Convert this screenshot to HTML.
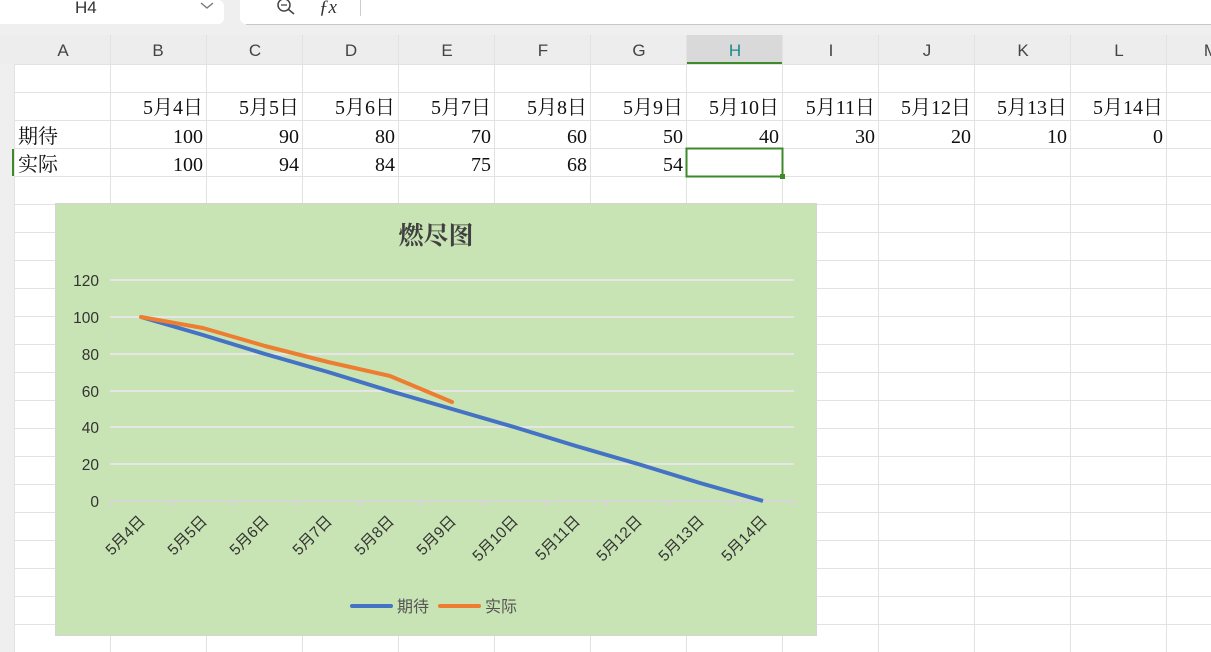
<!DOCTYPE html>
<html><head><meta charset="utf-8"><style>
body{margin:0;width:1211px;height:652px;overflow:hidden;background:#fff;font-family:"Liberation Sans","Noto Sans CJK SC",sans-serif}
svg{position:absolute;left:0;top:0}
.c{font-family:"Liberation Serif","Noto Serif CJK SC",serif;font-size:20px;fill:#111}
.h{font-family:"Liberation Sans",sans-serif;font-size:17px;fill:#444;text-anchor:middle}
.ax{font-family:"Liberation Sans","Noto Sans CJK SC",sans-serif;font-size:15.5px;fill:#333}
</style></head><body>
<svg width="1211" height="652" viewBox="0 0 1211 652">
<rect x="0" y="0" width="1211" height="35" fill="#efefef"/>
<path d="M0 0H218a6 6 0 0 1 6 6V18a6 6 0 0 1 -6 6H0Z" fill="#fff"/>
<path d="M240 0H1211V24H246a6 6 0 0 1 -6 -6Z" fill="#fff"/>
<line x1="246" y1="24.5" x2="1211" y2="24.5" stroke="#c8c8c8"/>
<text x="75" y="13" font-size="17" fill="#333" font-family="Liberation Sans">H4</text>
<path d="M201 3l6 5 6-5" stroke="#777" stroke-width="1.4" fill="none"/>
<circle cx="284" cy="5" r="6" stroke="#444" stroke-width="1.5" fill="none"/>
<line x1="288" y1="9" x2="294" y2="14" stroke="#444" stroke-width="1.5"/>
<line x1="281" y1="5" x2="287" y2="5" stroke="#444" stroke-width="1.3"/>
<text x="319" y="13" font-size="19" font-style="italic" fill="#333" font-family="Liberation Serif">ƒx</text>
<line x1="360.5" y1="0" x2="360.5" y2="16" stroke="#ccc"/>
<rect x="0" y="35" width="1211" height="29" fill="#ededed"/>
<rect x="686" y="35" width="97" height="29" fill="#d9d9d9"/>
<rect x="686" y="62" width="97" height="2" fill="#3d8a2a"/>
<rect x="0" y="64" width="14" height="588" fill="#efefef"/>
<g stroke="#e2e2e2" stroke-width="1">
<line x1="14" y1="64.5" x2="1211" y2="64.5"/>
<line x1="14" y1="92.5" x2="1211" y2="92.5"/>
<line x1="14" y1="120.5" x2="1211" y2="120.5"/>
<line x1="14" y1="148.5" x2="1211" y2="148.5"/>
<line x1="14" y1="176.5" x2="1211" y2="176.5"/>
<line x1="14" y1="204.5" x2="1211" y2="204.5"/>
<line x1="14" y1="232.5" x2="1211" y2="232.5"/>
<line x1="14" y1="260.5" x2="1211" y2="260.5"/>
<line x1="14" y1="288.5" x2="1211" y2="288.5"/>
<line x1="14" y1="316.5" x2="1211" y2="316.5"/>
<line x1="14" y1="344.5" x2="1211" y2="344.5"/>
<line x1="14" y1="372.5" x2="1211" y2="372.5"/>
<line x1="14" y1="400.5" x2="1211" y2="400.5"/>
<line x1="14" y1="428.5" x2="1211" y2="428.5"/>
<line x1="14" y1="456.5" x2="1211" y2="456.5"/>
<line x1="14" y1="484.5" x2="1211" y2="484.5"/>
<line x1="14" y1="512.5" x2="1211" y2="512.5"/>
<line x1="14" y1="540.5" x2="1211" y2="540.5"/>
<line x1="14" y1="568.5" x2="1211" y2="568.5"/>
<line x1="14" y1="596.5" x2="1211" y2="596.5"/>
<line x1="14" y1="624.5" x2="1211" y2="624.5"/>
<line x1="14.5" y1="64" x2="14.5" y2="652"/>
<line x1="110.5" y1="35" x2="110.5" y2="652"/>
<line x1="206.5" y1="35" x2="206.5" y2="652"/>
<line x1="302.5" y1="35" x2="302.5" y2="652"/>
<line x1="398.5" y1="35" x2="398.5" y2="652"/>
<line x1="494.5" y1="35" x2="494.5" y2="652"/>
<line x1="590.5" y1="35" x2="590.5" y2="652"/>
<line x1="686.5" y1="35" x2="686.5" y2="652"/>
<line x1="782.5" y1="35" x2="782.5" y2="652"/>
<line x1="878.5" y1="35" x2="878.5" y2="652"/>
<line x1="974.5" y1="35" x2="974.5" y2="652"/>
<line x1="1070.5" y1="35" x2="1070.5" y2="652"/>
<line x1="1166.5" y1="35" x2="1166.5" y2="652"/>
</g>
<g class="h">
<text x="63" y="56">A</text><text x="158" y="56">B</text><text x="255" y="56">C</text><text x="351" y="56">D</text><text x="447" y="56">E</text><text x="543" y="56">F</text><text x="639" y="56">G</text><text x="735" y="56" fill="#1a8a8a">H</text><text x="831" y="56">I</text><text x="927" y="56">J</text><text x="1023" y="56">K</text><text x="1119" y="56">L</text><text x="1211" y="56">M</text>
</g>
<rect x="12" y="149" width="2" height="27" fill="#3d8a2a"/>
<g class="c" text-anchor="end">
<text x="203" y="114">5月4日</text><text x="299" y="114">5月5日</text><text x="395" y="114">5月6日</text><text x="491" y="114">5月7日</text><text x="587" y="114">5月8日</text><text x="683" y="114">5月9日</text><text x="779" y="114">5月10日</text><text x="875" y="114">5月11日</text><text x="971" y="114">5月12日</text><text x="1067" y="114">5月13日</text><text x="1163" y="114">5月14日</text>
<text x="203" y="143">100</text><text x="299" y="143">90</text><text x="395" y="143">80</text><text x="491" y="143">70</text><text x="587" y="143">60</text><text x="683" y="143">50</text><text x="779" y="143">40</text><text x="875" y="143">30</text><text x="971" y="143">20</text><text x="1067" y="143">10</text><text x="1163" y="143">0</text>
<text x="203" y="171">100</text><text x="299" y="171">94</text><text x="395" y="171">84</text><text x="491" y="171">75</text><text x="587" y="171">68</text><text x="683" y="171">54</text>
</g>
<text class="c" x="18" y="143">期待</text><text class="c" x="18" y="171">实际</text>
<rect x="686.5" y="148.5" width="96" height="28" fill="none" stroke="#3d8a2a" stroke-width="2"/>
<rect x="780" y="174" width="5" height="5" fill="#3d8a2a"/>
<rect x="55.5" y="203.5" width="761" height="432" fill="#c9e4b4" stroke="#d4d4d4"/>
<text x="436" y="244" text-anchor="middle" font-size="25" font-weight="bold" fill="#404040" font-family="Liberation Serif,Noto Serif CJK SC,serif">燃尽图</text>
<g stroke="#e6e6e6" stroke-width="2">
<line x1="110" y1="280" x2="794" y2="280"/><line x1="110" y1="317" x2="794" y2="317"/><line x1="110" y1="354" x2="794" y2="354"/><line x1="110" y1="391" x2="794" y2="391"/><line x1="110" y1="427" x2="794" y2="427"/><line x1="110" y1="464" x2="794" y2="464"/>
</g>
<g stroke="#d6d6d6" stroke-width="2">
<line x1="110" y1="501" x2="794" y2="501"/>
<path d="M110 500v7M172 500v7M234 500v7M297 500v7M359 500v7M421 500v7M483 500v7M545 500v7M607 500v7M669 500v7M732 500v7M794 500v7"/>
</g>
<g class="ax" text-anchor="end">
<text x="99" y="286">120</text><text x="99" y="323">100</text><text x="99" y="360">80</text><text x="99" y="397">60</text><text x="99" y="433">40</text><text x="99" y="470">20</text><text x="99" y="507">0</text>
</g>
<g class="ax" text-anchor="end">
<text transform="translate(146,522) rotate(-45)">5月4日</text>
<text transform="translate(208,522) rotate(-45)">5月5日</text>
<text transform="translate(270,522) rotate(-45)">5月6日</text>
<text transform="translate(333,522) rotate(-45)">5月7日</text>
<text transform="translate(395,522) rotate(-45)">5月8日</text>
<text transform="translate(457,522) rotate(-45)">5月9日</text>
<text transform="translate(519,522) rotate(-45)">5月10日</text>
<text transform="translate(581,522) rotate(-45)">5月11日</text>
<text transform="translate(643,522) rotate(-45)">5月12日</text>
<text transform="translate(705,522) rotate(-45)">5月13日</text>
<text transform="translate(768,522) rotate(-45)">5月14日</text>
</g>
<polyline points="141,317 203,335 265,354 328,372 390,391 452,409 514,427 576,446 638,464 700,483 763,501" fill="none" stroke="#4472c4" stroke-width="4" stroke-linejoin="round"/>
<polyline points="141,317 203,328 265,346 328,362 390,376 452,402" fill="none" stroke="#ed7d31" stroke-width="4" stroke-linejoin="round" stroke-linecap="round"/>
<line x1="352" y1="606" x2="391" y2="606" stroke="#4472c4" stroke-width="4" stroke-linecap="round"/>
<text x="397" y="612" font-size="16" fill="#555" font-family="Liberation Sans,Noto Sans CJK SC,sans-serif">期待</text>
<line x1="440" y1="606" x2="479" y2="606" stroke="#ed7d31" stroke-width="4" stroke-linecap="round"/>
<text x="485" y="612" font-size="16" fill="#555" font-family="Liberation Sans,Noto Sans CJK SC,sans-serif">实际</text>
</svg>
</body></html>
